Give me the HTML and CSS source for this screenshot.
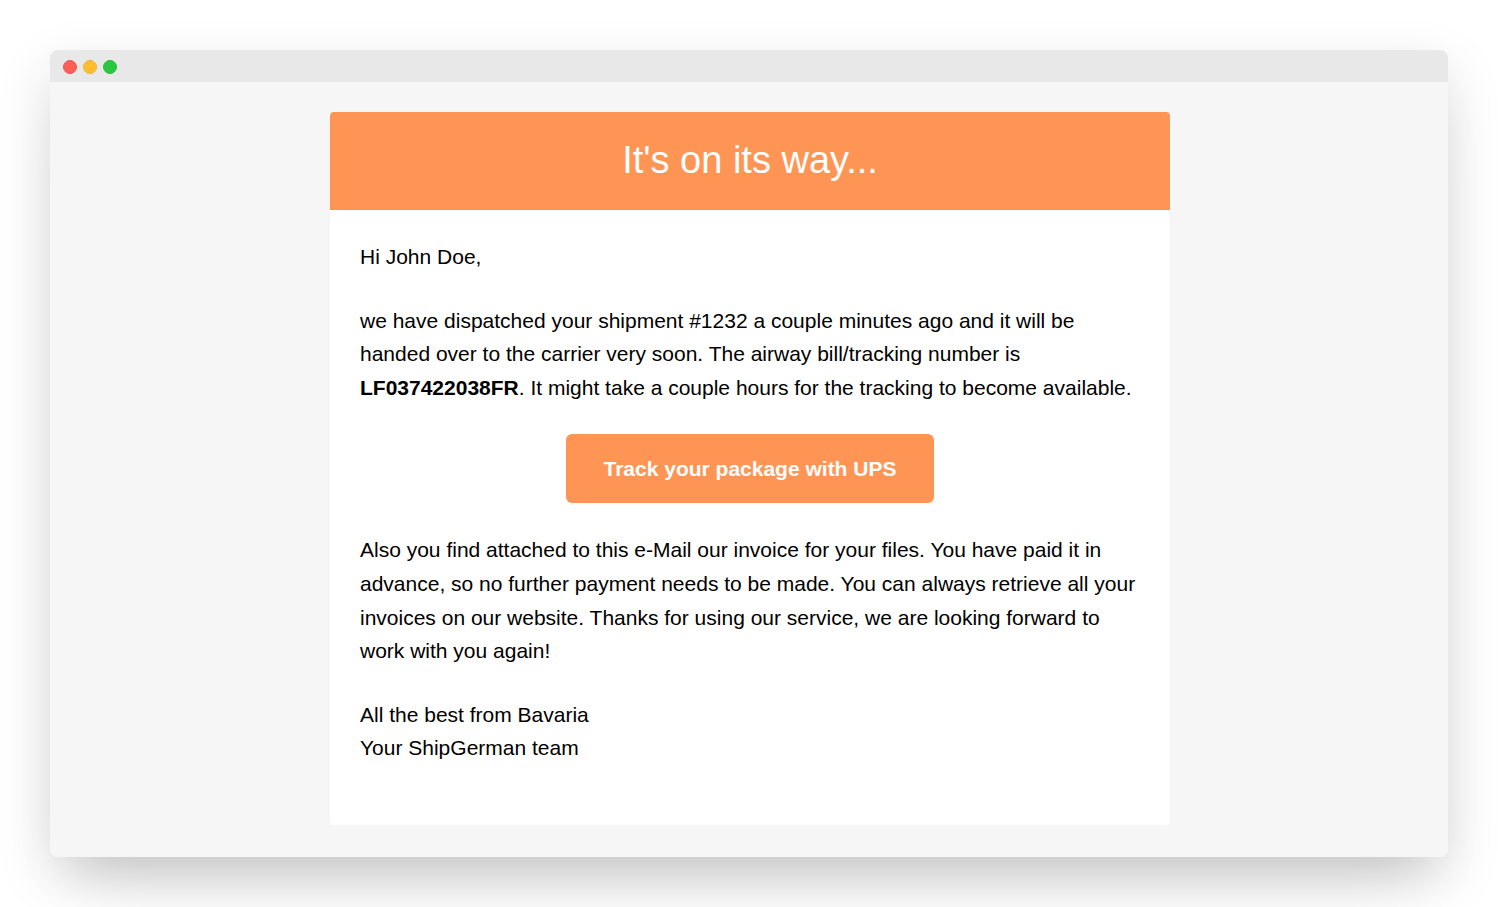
FILE: index.html
```html
<!DOCTYPE html>
<html lang="en">
<head>
<meta charset="utf-8">
<title>It's on its way...</title>
<link rel="stylesheet" href="styles.css">
</head>
<body>
<div class="window">
  <div class="titlebar">
    <span class="dot dot-close"></span>
    <span class="dot dot-minimize"></span>
    <span class="dot dot-zoom"></span>
  </div>
  <main class="desk">
    <article class="mail">
      <header class="mail-header"><h1>It's on its way...</h1></header>
      <div class="mail-body">
        <p>Hi John Doe,</p>
        <p>we have dispatched your shipment #1232 a couple minutes ago and it will be handed over to the carrier very soon. The airway bill/tracking number is <strong>LF037422038FR</strong>. It might take a couple hours for the tracking to become available.</p>
        <div class="action"><a class="button" href="#">Track your package with UPS</a></div>
        <p>Also you find attached to this e-Mail our invoice for your files. You have paid it in advance, so no further payment needs to be made. You can always retrieve all your invoices on our website. Thanks for using our service, we are looking forward to work with you again!</p>
        <p>All the best from Bavaria<br>Your ShipGerman team</p>
      </div>
    </article>
  </main>
</div>
</body>
</html>
```

FILE: styles.css
```css
* {
  box-sizing: border-box;
}

body {
  margin: 0;
  padding: 50px;
  background: #fff;
  color: #000;
  font-family: "Liberation Sans", Arial, sans-serif;
  font-size: 21px;
  line-height: 1.6;
}

.window {
  border-radius: 8px;
  box-shadow:
    0 40px 60px -30px rgba(0, 0, 0, 0.15),
    0 20px 56px rgba(0, 0, 0, 0.14);
}

.titlebar {
  display: flex;
  align-items: center;
  gap: 6px;
  height: 32px;
  padding: 2px 13px 0;
  border-radius: 8px 8px 0 0;
  background: #e8e8e8;
}

.dot {
  width: 14px;
  height: 14px;
  border: 1px solid;
  border-radius: 50%;
}

.dot-close {
  background: #ff5f57;
  border-color: #f0564d;
}

.dot-minimize {
  background: #ffbd2e;
  border-color: #edb03a;
}

.dot-zoom {
  background: #28c940;
  border-color: #2abb38;
}

.desk {
  padding: 30px 30px 32px 32px;
  border-radius: 0 0 8px 8px;
  background: #f6f6f6;
}

.mail {
  max-width: 840px;
  margin: 0 auto;
  overflow: hidden;
  border-radius: 4px;
  background: #fff;
}

.mail-header {
  padding: 18px 30px 20px;
  background: #ff9554;
  color: #fff;
  text-align: center;
}

.mail-header h1 {
  margin: 0;
  font-size: 38px;
  font-weight: 400;
  line-height: 60px;
}

.mail-body {
  padding: 30px 30px 60px;
}

.mail-body p {
  margin: 0 0 30px;
}

.mail-body p:last-child {
  margin-bottom: 0;
}

.action {
  display: flex;
  justify-content: center;
  margin-bottom: 30px;
}

.button {
  padding: 18px 38px;
  border-radius: 6px;
  background: #ff9554;
  color: #fff;
  font-weight: 700;
  line-height: 33px;
  text-decoration: none;
}
```
